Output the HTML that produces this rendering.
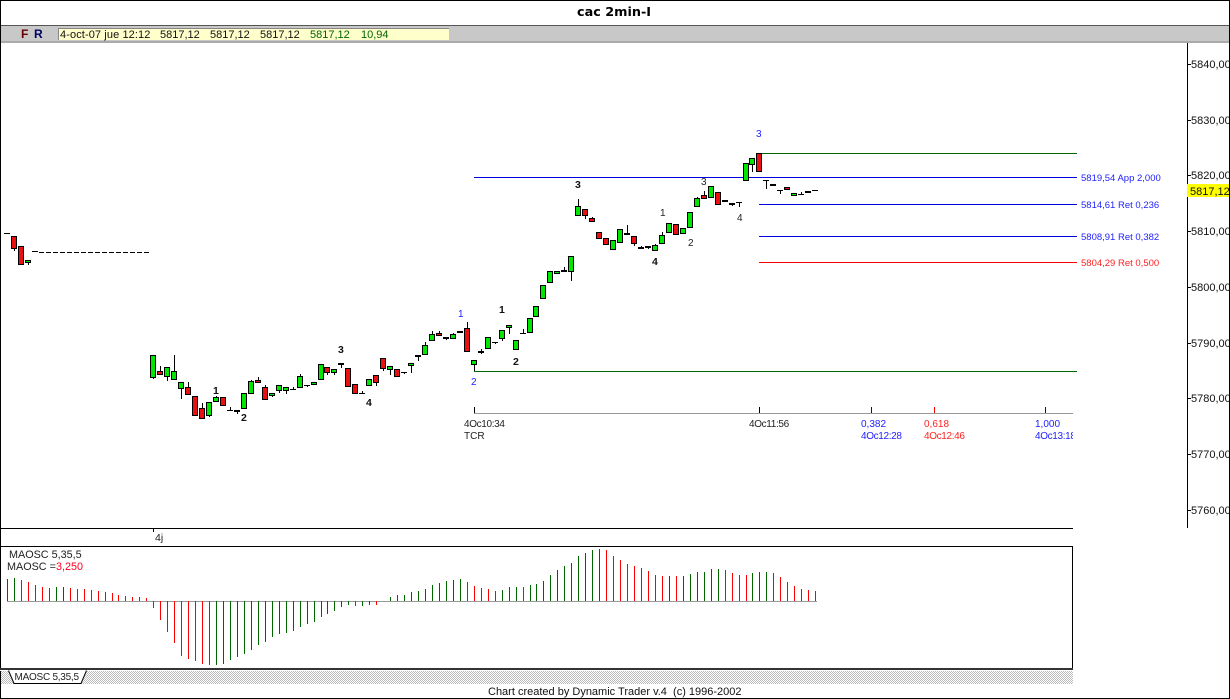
<!DOCTYPE html>
<html>
<head>
<meta charset="utf-8">
<title>cac 2min-I</title>
<style>
html,body{margin:0;padding:0;background:#fff;width:1230px;height:699px;overflow:hidden}
svg{display:block}
text{font-family:"Liberation Sans",sans-serif;font-size:10px}
.ax{font-size:11px;fill:#111;letter-spacing:0}
.tb{font-size:11px;fill:#111}
.b{font-weight:bold;fill:#111;font-size:10.5px}
.n{fill:#222;font-size:10px}
.t{letter-spacing:-.35px}
.bl{fill:#22f}
.rd{fill:#f22}
.fib{font-size:9.5px}
</style>
</head>
<body>
<svg width="1230" height="699" viewBox="0 0 1230 699" xmlns="http://www.w3.org/2000/svg">
<defs>
<pattern id="h" width="2" height="2" patternUnits="userSpaceOnUse">
<rect width="2" height="2" fill="#fff"/>
<rect x="0" y="0" width="1" height="1" fill="#bbb"/>
<rect x="1" y="1" width="1" height="1" fill="#bbb"/>
</pattern>
</defs>
<rect width="1230" height="699" fill="#fff"/>

<g shape-rendering="crispEdges">
<!-- toolbar -->
<rect x="1" y="25" width="1228" height="17" fill="#c8c8c8"/>
<rect x="1" y="25" width="1228" height="1" fill="#555"/>
<rect x="1" y="41" width="1228" height="2" fill="#aaa"/>
<rect x="58" y="28" width="391" height="12" fill="#ffffcc"/>
<rect x="58" y="28" width="391" height="1" fill="#888"/>
<rect x="58" y="28" width="1" height="12" fill="#888"/>

<!-- frame -->
<rect x="0" y="0" width="1230" height="1" fill="#000"/>
<rect x="0" y="698" width="1230" height="1" fill="#000"/>
<rect x="0" y="0" width="1" height="699" fill="#000"/>
<rect x="1229" y="0" width="1" height="699" fill="#000"/>

<!-- axis -->
<path fill="none" stroke="#000" d="M1187.5 43V528M1187 64.5h4M1187 120.5h4M1187 175.5h4M1187 231.5h4M1187 287.5h4M1187 343.5h4M1187 398.5h4M1187 454.5h4M1187 510.5h4"/>
<rect x="1187" y="184" width="42" height="13" fill="#ff0"/>

<!-- horizontal lines -->
<path fill="none" stroke="#060" d="M760 153.5H1077M474 371.5H1077"/>
<path fill="none" stroke="#00d" d="M474 177.5H1077M759 204.5H1077M759 236.5H1077"/>
<path fill="none" stroke="#f00" d="M759 262.5H1077"/>
<path fill="none" stroke="#999" d="M474 413.5H1073"/>
<path fill="none" stroke="#000" d="M474.5 407V413M759.5 407V413"/>
<path fill="none" stroke="#00c" d="M871.5 407V413M1045.5 407V413"/>
<path fill="none" stroke="#f00" d="M934.5 407V413"/>

<!-- wicks -->
<path fill="none" stroke="#000" d="M14.5 249V251M28.5 263V265M153.5 378V379M160.5 366V371M167.5 377V381M174.5 355V371M181.5 389V399M188.5 382V387M202.5 403V408M209.5 416V417M216.5 396V397M251.5 380V381M258.5 377V380M265.5 385V387M272.5 396V397M279.5 391V393M286.5 391V394M300.5 374V376M327.5 373V375M334.5 373V375M376.5 383V386M383.5 369V371M390.5 370V375M411.5 366V373M418.5 357V361M425.5 342V345M432.5 331V334M439.5 331V333M453.5 333V334M467.5 322V328M474.5 365V371M481.5 349V354M502.5 339V341M509.5 328V334M564.5 267V270M571.5 272V281M578.5 199V206M585.5 216V219M592.5 217V218M627.5 225V233M634.5 244V246M641.5 246V247M648.5 248V249M655.5 244V245M662.5 232V235M697.5 197V198M704.5 191V195M752.5 165V172"/>

<!-- dashes and dojis -->
<path fill="none" stroke="#000" d="M4 233.5h6M32 251.5h6M227 410.5h6M230.5 407V411M234 410.5h6M234 411.5h6M237.5 412V414M290 389.5h6M293.5 387V390M304 385.5h6M307.5 385V387M338 363.5h6M338 364.5h6M341.5 365V368M359 393.5h6M362.5 391V394M401 372.5h6M404.5 372V374M443 337.5h6M443 338.5h6M446.5 339V340M457 331.5h6M457 332.5h6M492 342.5h6M495.5 342V344M520 333.5h6M523.5 329V334M729 203.5h6M729 204.5h6M732.5 205V206M736 202.5h6M739.5 202V207M763 180.5h6M766.5 180V189M777 190.5h6M780.5 190V194M798 194.5h6M801.5 192V195M812 190.5h6"/>
<path fill="none" stroke="#000" stroke-dasharray="5 2" d="M39 252.5H149"/>

<!-- green bodies -->
<path fill="#00e600" stroke="#000" d="M25.5 260.5h5v2h-5zM150.5 355.5h5v22h-5zM164.5 367.5h5v9h-5zM171.5 371.5h5v8h-5zM178.5 382.5h5v6h-5zM206.5 402.5h5v13h-5zM213.5 397.5h5v4h-5zM241.5 393.5h5v15h-5zM248.5 381.5h5v12h-5zM269.5 393.5h5v2h-5zM276.5 385.5h5v5h-5zM283.5 387.5h5v3h-5zM297.5 376.5h5v11h-5zM311.5 382.5h5v2h-5zM318.5 364.5h5v15h-5zM331.5 369.5h5v3h-5zM366.5 379.5h5v6h-5zM387.5 366.5h5v3h-5zM408.5 363.5h5v2h-5zM415.5 355.5h5v1h-5zM422.5 345.5h5v9h-5zM429.5 334.5h5v6h-5zM450.5 334.5h5v4h-5zM471.5 360.5h5v4h-5zM478.5 351.5h5v1h-5zM485.5 337.5h5v11h-5zM499.5 330.5h5v8h-5zM506.5 325.5h5v2h-5zM513.5 340.5h5v9h-5zM527.5 318.5h5v14h-5zM533.5 306.5h5v10h-5zM540.5 285.5h5v13h-5zM547.5 271.5h5v11h-5zM554.5 271.5h5v2h-5zM561.5 270.5h5v1h-5zM568.5 256.5h5v15h-5zM575.5 206.5h5v9h-5zM610.5 240.5h5v9h-5zM617.5 229.5h5v13h-5zM638.5 247.5h5v1h-5zM645.5 246.5h5v1h-5zM652.5 245.5h5v5h-5zM659.5 235.5h5v8h-5zM666.5 223.5h5v9h-5zM680.5 228.5h5v5h-5zM687.5 212.5h5v15h-5zM694.5 198.5h5v8h-5zM708.5 186.5h5v11h-5zM722.5 200.5h5v1h-5zM743.5 163.5h5v17h-5zM749.5 158.5h5v6h-5zM791.5 193.5h5v2h-5zM805.5 191.5h5v1h-5z"/>

<!-- red bodies -->
<path fill="#e81010" stroke="#000" d="M11.5 236.5h5v12h-5zM18.5 246.5h5v18h-5zM157.5 371.5h5v3h-5zM185.5 387.5h5v7h-5zM192.5 396.5h5v19h-5zM199.5 408.5h5v10h-5zM220.5 397.5h5v8h-5zM255.5 380.5h5v2h-5zM262.5 387.5h5v12h-5zM324.5 367.5h5v5h-5zM345.5 368.5h5v18h-5zM352.5 384.5h5v9h-5zM373.5 375.5h5v7h-5zM380.5 358.5h5v10h-5zM394.5 369.5h5v7h-5zM436.5 333.5h5v2h-5zM464.5 328.5h5v23h-5zM582.5 209.5h5v6h-5zM589.5 218.5h5v3h-5zM596.5 232.5h5v6h-5zM603.5 238.5h5v6h-5zM624.5 233.5h5v1h-5zM631.5 236.5h5v7h-5zM673.5 224.5h5v10h-5zM701.5 195.5h5v3h-5zM715.5 192.5h5v12h-5zM756.5 153.5h5v18h-5zM770.5 184.5h5v1h-5zM784.5 187.5h5v2h-5z"/>

<!-- separators -->
<path fill="none" stroke="#000" d="M0 528.5H1073M153.5 528V532M0 546.5H1072.5V668"/>
<rect x="0" y="668" width="1073" height="2" fill="#333"/>
<rect x="0" y="670" width="1073" height="1" fill="#fff"/>
<rect x="1" y="671" width="1072" height="13" fill="url(#h)"/>
</g>
<path fill="#fff" stroke="#000" d="M8.5 670.5L14 683.5H81L86.5 670.5"/>

<g shape-rendering="crispEdges">
<!-- osc -->
<path fill="none" stroke="#999" d="M7 601.5H817"/>
<path fill="none" stroke="#060" d="M7.5 601V579M14.5 601V578M56.5 601V587M63.5 601V587M216.5 601V665M223.5 601V664M230.5 601V660M237.5 601V657M244.5 601V654M251.5 601V650M258.5 601V645M265.5 601V642M272.5 601V637M279.5 601V634M286.5 601V633M293.5 601V631M300.5 601V627M307.5 601V624M314.5 601V622M321.5 601V617M327.5 601V614M334.5 601V611M341.5 601V607M348.5 601V605M362.5 601V606M369.5 601V605M390.5 601V597M397.5 601V595M404.5 601V595M411.5 601V592M418.5 601V591M425.5 601V589M432.5 601V585M439.5 601V583M446.5 601V581M453.5 601V580M460.5 601V579M502.5 601V590M509.5 601V587M516.5 601V587M530.5 601V585M536.5 601V584M543.5 601V581M550.5 601V575M557.5 601V570M564.5 601V566M571.5 601V563M578.5 601V556M585.5 601V553M592.5 601V550M599.5 601V549M669.5 601V576M683.5 601V576M690.5 601V574M697.5 601V572M704.5 601V572M711.5 601V569M718.5 601V569M752.5 601V573M759.5 601V572M766.5 601V572"/>
<path fill="none" stroke="#f00" d="M21.5 601V580M28.5 601V582M35.5 601V585M42.5 601V587M49.5 601V588M70.5 601V588M77.5 601V589M84.5 601V589M91.5 601V590M98.5 601V591M105.5 601V592M112.5 601V593M118.5 601V595M125.5 601V596M132.5 601V597M139.5 601V597M146.5 601V598M153.5 601V608M160.5 601V620M167.5 601V632M174.5 601V643M181.5 601V656M188.5 601V659M195.5 601V661M202.5 601V664M209.5 601V665M355.5 601V606M376.5 601V605M467.5 601V582M474.5 601V586M481.5 601V588M488.5 601V589M495.5 601V591M523.5 601V587M606.5 601V550M613.5 601V556M620.5 601V560M627.5 601V564M634.5 601V566M641.5 601V568M648.5 601V571M655.5 601V575M662.5 601V576M676.5 601V576M725.5 601V570M732.5 601V573M739.5 601V575M746.5 601V575M773.5 601V573M780.5 601V577M787.5 601V582M794.5 601V586M801.5 601V589M808.5 601V590M815.5 601V591"/>
</g>

<!-- title -->
<text x="577" y="16" style="font-family:'DejaVu Sans',sans-serif;font-weight:bold;font-size:12.8px;fill:#000">cac 2min-I</text>

<!-- toolbar text -->
<text x="21" y="38" style="font-weight:bold;font-size:12px;fill:#600">F</text>
<text x="34" y="38" style="font-weight:bold;font-size:12px;fill:#006">R</text>
<text class="tb" x="60" y="38" style="letter-spacing:.1px">4-oct-07 jue 12:12</text>
<text class="tb" x="160" y="38">5817,12</text>
<text class="tb" x="210" y="38">5817,12</text>
<text class="tb" x="260" y="38">5817,12</text>
<text class="tb" x="310" y="38" style="fill:#060">5817,12</text>
<text class="tb" x="361" y="38" style="fill:#060">10,94</text>

<!-- axis labels -->
<text class="ax" x="1191" y="68">5840,00</text>
<text class="ax" x="1191" y="124">5830,00</text>
<text class="ax" x="1191" y="179">5820,00</text>
<text class="ax" x="1190" y="195">5817,12</text>
<text class="ax" x="1191" y="235">5810,00</text>
<text class="ax" x="1191" y="291">5800,00</text>
<text class="ax" x="1191" y="347">5790,00</text>
<text class="ax" x="1191" y="402">5780,00</text>
<text class="ax" x="1191" y="458">5770,00</text>
<text class="ax" x="1191" y="514">5760,00</text>
<rect x="1229" y="0" width="1" height="699" fill="#000"/>

<!-- wave labels -->
<text class="b" x="213" y="394">1</text>
<text class="b" x="241" y="421">2</text>
<text class="b" x="338" y="353">3</text>
<text class="b" x="366" y="406">4</text>
<text class="bl" x="458" y="317">1</text>
<text class="bl" x="471" y="385">2</text>
<text class="b" x="499" y="313">1</text>
<text class="b" x="513" y="365">2</text>
<text class="b" x="575" y="188">3</text>
<text class="b" x="652" y="265">4</text>
<text class="n" x="660" y="216">1</text>
<text class="n" x="688" y="246">2</text>
<text class="n" x="701" y="185">3</text>
<text class="n" x="737" y="221">4</text>
<text class="bl" x="756" y="137">3</text>

<!-- fib labels -->
<text class="bl fib" x="1081" y="181">5819,54 App 2,000</text>
<text class="bl fib" x="1081" y="208">5814,61 Ret 0,236</text>
<text class="bl fib" x="1081" y="240">5808,91 Ret 0,382</text>
<text class="rd fib" x="1081" y="266">5804,29 Ret 0,500</text>

<!-- time labels -->
<text class="n t" x="464" y="427">4Oc10:34</text>
<text class="n" x="464" y="439">TCR</text>
<text class="n t" x="749" y="427">4Oc11:56</text>
<text class="bl" x="861" y="427">0,382</text>
<text class="bl t" x="861" y="439">4Oc12:28</text>
<text class="rd" x="924" y="427">0,618</text>
<text class="rd t" x="924" y="439">4Oc12:46</text>
<text class="bl" x="1035" y="427">1,000</text>
<text class="bl t" x="1035" y="439">4Oc13:18</text>
<rect x="1073" y="428" width="14" height="14" fill="#fff"/>

<!-- bottom labels -->
<text x="155" y="541" style="fill:#222;font-size:10.5px">4j</text>
<text x="9" y="558" style="fill:#222;font-size:10.8px">MAOSC 5,35,5</text>
<text x="7" y="570" style="fill:#222;font-size:10.8px">MAOSC =</text>
<text x="56" y="570" style="fill:#f02;font-size:10.8px">3,250</text>
<text x="14.5" y="680" style="fill:#222;font-size:10px;letter-spacing:-.25px">MAOSC 5,35,5</text>
<text x="488" y="695" style="fill:#111;font-size:11px">Chart created by Dynamic Trader v.4&#160;&#160;(c) 1996-2002</text>
</svg>
</body>
</html>
